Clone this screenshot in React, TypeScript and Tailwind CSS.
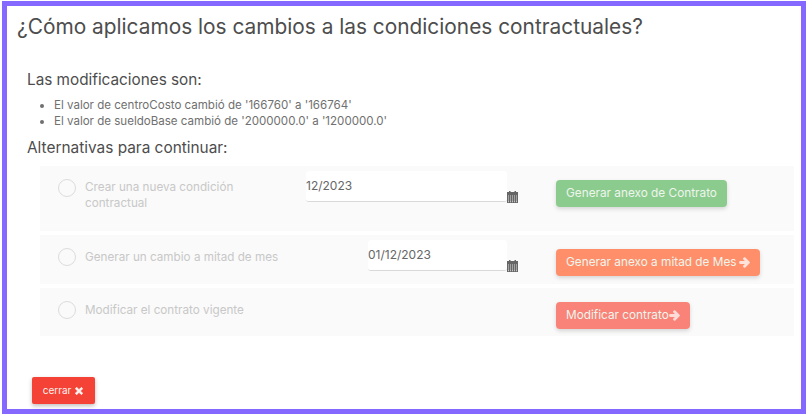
import React from "react";
import { FaArrowRight, FaTimes } from "react-icons/fa";

function Cal() {
  return (
    <svg width="11" height="12" viewBox="0 0 11 12" className="block">
      <rect x="0" y="1" width="11" height="11" fill="#666" />
      <rect x="2" y="0" width="1.5" height="2" fill="#666" />
      <rect x="7.5" y="0" width="1.5" height="2" fill="#666" />
      <g fill="#ddd">
        {[1, 3, 5, 7, 9].map((x) =>
          [4.5, 6.5, 8.5, 10.2].map((y) => <rect key={x + "-" + y} x={x} y={y} width="1" height="1" />)
        )}
      </g>
    </svg>
  );
}

function Radio() {
  return <span className="w-[18px] h-[18px] rounded-full border border-[#dcdcdc] shrink-0 block" />;
}

function DateField({ value, w }: { value: string; w: string }) {
  return (
    <div className="flex items-end">
      <div className={`${w} h-[31px] bg-white rounded-[3px] border-b border-[#d9d9d9] text-[12px] leading-[30px] text-[#666]`}>
        {value}
      </div>
      <div className="-mb-px"><Cal /></div>
    </div>
  );
}

function Btn({ color, children }: { color: string; children: React.ReactNode }) {
  return (
    <div className={`${color} h-[27px] rounded-[4px] px-[10px] flex items-center text-[11.8px] text-[#eef5ec] shadow-[0_2px_4px_rgba(0,0,0,0.15)] whitespace-nowrap`}>
      {children}
    </div>
  );
}

export default function App() {
  return (
    <div className="w-[807px] h-[415px] overflow-hidden bg-white" style={{ fontFamily: "Inter, sans-serif" }}>
      <div className="ml-[2px] mt-[1px] w-[804px] h-[413px] border-[5px] border-[#8468ff] flex flex-col">
        <h1 className="text-[20.85px] leading-[24px] text-[#4d4d4d] mt-[9px] ml-[10px] font-normal whitespace-nowrap">¿Cómo aplicamos los cambios a las condiciones contractuales?</h1>
        <div className="ml-[20px] mt-[32px] text-[15.3px] leading-[17px] text-[#4d4d4d]">Las modificaciones son:</div>
        <ul className="list-disc ml-[47px] mt-[9px] text-[11.55px] leading-[16px] text-[#707070]">
          <li>El valor de centroCosto cambió de '166760' a '166764'</li>
          <li>El valor de sueldoBase cambió de '2000000.0' a '1200000.0'</li>
        </ul>
        <div className="ml-[20px] mt-[10px] text-[15.4px] leading-[17px] text-[#4d4d4d]">Alternativas para continuar:</div>
        <div className="ml-[33px] mr-[7px] mt-[10px] flex flex-col gap-[4px] text-[11.7px] text-[#c8c8c8]">
          <div className="h-[65px] bg-[#fafafa] flex">
            <div className="w-[266px] pl-[18px] pt-[13px] flex gap-[9px]">
              <Radio />
              <div className="leading-[16px] w-[165px]">Crear una nueva condición contractual</div>
            </div>
            <div className="pt-[5px]"><DateField value="12/2023" w="w-[201px]" /></div>
            <div className="ml-[38px] pt-[14px]"><Btn color="bg-[#8bcb8e]">Generar anexo de Contrato</Btn></div>
          </div>
          <div className="h-[49px] bg-[#fafafa] flex">
            <div className="w-[328px] pl-[18px] pt-[13px] flex gap-[9px]">
              <Radio />
              <div className="leading-[16px] mt-px">Generar un cambio a mitad de mes</div>
            </div>
            <div className="pt-[5px]"><DateField value="01/12/2023" w="w-[139px]" /></div>
            <div className="ml-[38px] pt-[14px]"><Btn color="bg-[#ff8f6b]">Generar anexo a mitad de Mes<FaArrowRight stroke="currentColor" strokeWidth={50} className="ml-[2px] text-[11px] text-[#ffe3da]" /></Btn></div>
          </div>
          <div className="h-[48px] bg-[#fafafa] flex">
            <div className="w-[516px] pl-[18px] pt-[13px] flex gap-[9px]">
              <Radio />
              <div className="leading-[16px] mt-px">Modificar el contrato vigente</div>
            </div>
            <div className="pt-[14px]"><Btn color="bg-[#f98379]">Modificar contrato<FaArrowRight stroke="currentColor" strokeWidth={50} className="text-[11px] text-[#ffdcd8]" /></Btn></div>
          </div>
        </div>
        <div className="mt-auto mb-[5px] ml-[25px] w-[63px] h-[27px] bg-[#f44336] rounded-[2px] text-[#fff2f0] text-[10px] flex items-center justify-center gap-[3px] shadow-[0_2px_4px_rgba(0,0,0,0.25)]">
          cerrar
          <FaTimes stroke="currentColor" strokeWidth={50} className="text-[10px]" />
        </div>
      </div>
    </div>
  );
}
